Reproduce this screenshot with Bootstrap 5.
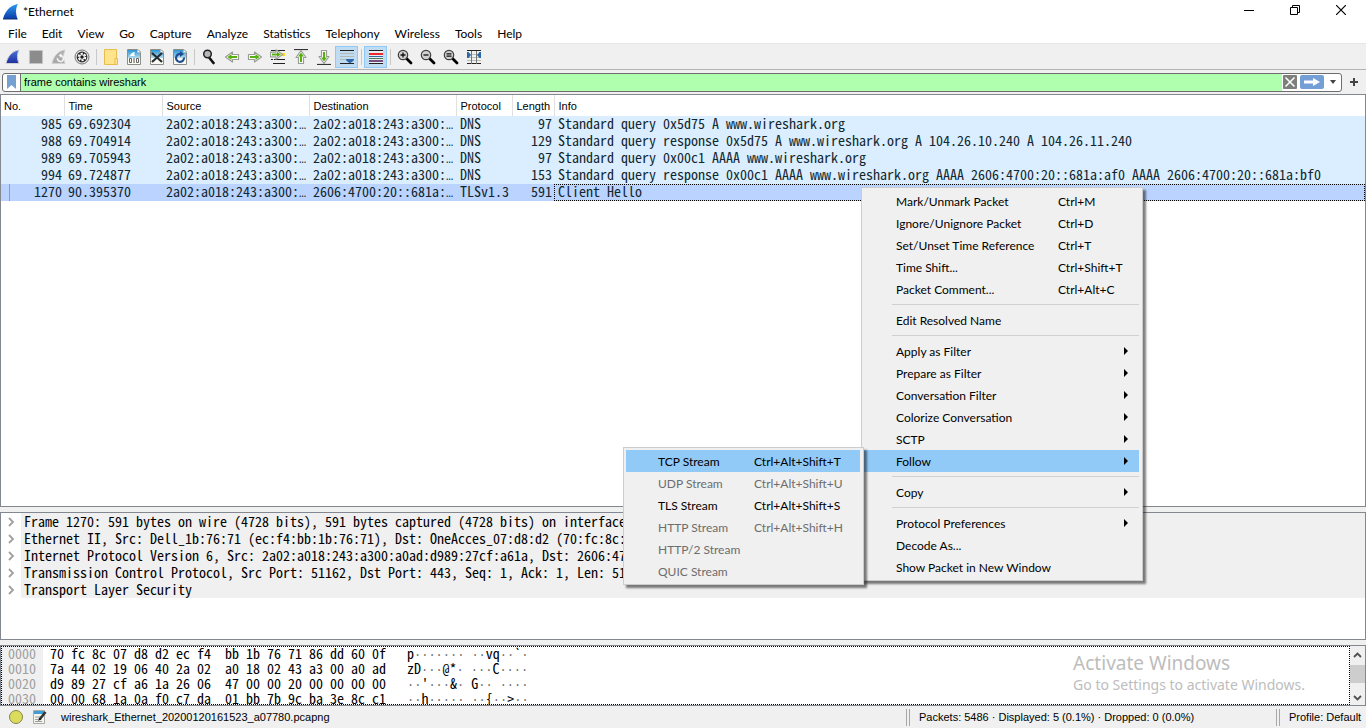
<!DOCTYPE html>
<html lang="en">
<head>
<meta charset="utf-8">
<meta name="viewport" content="width=device-width, initial-scale=1">
<title>*Ethernet</title>
<link href="https://cdn.jsdelivr.net/npm/bootstrap@5.3.0/dist/css/bootstrap.min.css" rel="stylesheet">
<style>
  :root { --ui: Lato, "Open Sans", sans-serif; --tahoma: "Liberation Sans", sans-serif; --fixed: "Noto Sans Mono CJK SC", "Liberation Mono", monospace; --frame: #828790; --face: #f0f0f0; }
  body { font: 12px/16px var(--ui); color: #000; background: var(--face); height: 100vh; overflow: hidden; }
  button { border: 0; background: none; padding: 0; color: inherit; }
  svg { display: block; flex: none; }
  .title-bar { height: 24px; background: #fff; padding: 0 2px 0 3px; }
  .win-btn { width: 46px; height: 20px; }
  .menu-bar { height: 19px; background: #fff; padding-left: 8px; gap: 15px; }
  .menu-bar .nav-link { padding: 0; color: #000; line-height: 19px; }
  .tool-bar { height: 27px; border-top: 1px solid #e6e6e6; border-bottom: 1px solid #b4b4b4; padding-left: 1px; }
  .tool-btn { width: 23px; height: 22px; border: 1px solid transparent; display: flex; align-items: center; justify-content: center; }
  .tool-btn.active { background: #c0dcf3; border-color: #90c8f6; }
  .tool-sep { width: 1px; height: 16px; margin: 0 2px 0 3px; background: #c8c8c8; }
  .filter-bar { height: 24px; padding: 0 4px 0 2px; }
  .filter-box { height: 19px; border: 1px solid #6e6e6e; border-radius: 3px; background: #fff; overflow: hidden; }
  .filter-box input { border: 0; border-left: 1px solid #6e6e6e; border-radius: 0; background: #afffaf; color: #000; font: 11px/17px var(--tahoma); padding: 0 3px; min-height: 0; height: 17px; }
  .filter-box input:focus { background: #afffaf; }
  .pane { background: #fff; border: 1px solid var(--frame); overflow: hidden; }
  .pane + .pane { margin-top: 5px; }
  .packets { table-layout: fixed; width: 100%; border-collapse: collapse; }
  .packets th { font: 11px/16px var(--tahoma); height: 21px; padding: 0 0 0 4px; border-right: 1px solid #e0e0e0; }
  .packets th:first-child { padding-left: 3px; }
  .packets th:last-child { border-right: 0; }
  .packets td { font: 14px/15px var(--fixed); height: 17px; padding: 0 0 0 4px; color: #12272e; background: #daeeff; white-space: nowrap; vertical-align: top; }
  .packets .picked td { background: #bad3ff; }
  .packets .picked td:last-child { outline: 1px dotted #000; outline-offset: -1px; }
  .packets .picked td:first-child { background-image: linear-gradient(#9a9a9a, #9a9a9a); background-size: 1px 100%; background-position: 8px 0; background-repeat: no-repeat; }
  .packets .num { text-align: right; padding-right: 2px; }
  .dots { font: 12px/0 "Liberation Mono", monospace; }
  .details { height: 128px; }
  .details li { height: 17px; font: 14px/17px var(--fixed); white-space: nowrap; }
  .details .twist { width: 20px; padding-left: 6px; }
  .details .row-text { background: var(--face); padding-left: 3px; }
  .hex { height: 61px; }
  .hex-grid { outline: 1px dotted #000; outline-offset: -1px; }
  .hex pre { font: 14px/15px var(--fixed); margin: 0; overflow: hidden; color: #000; }
  .hex .offs { width: 42px; padding-left: 7px; background: var(--face); color: #a0a0a0; }
  .hex .bytes { padding-left: 7px; }
  .hex .chars { padding-left: 21px; }
  .hex .dots { color: #707070; }
  .scroll { width: 15px; background: var(--face); }
  .scroll .thumb { height: 18px; background: #cdcdcd; }
  .status-bar { height: 22px; font: 11px/16px var(--tahoma); }
  .status-bar .file-name { margin-left: 13px; }
  .status-sep { width: 4px; height: 17px; border: solid #a8a8a8; border-width: 0 1px; }
  .status-bar .packets-info { width: 366px; padding-left: 9px; }
  .status-bar .profile { width: 86px; padding-left: 9px; }
  .pop { background: var(--face); border: 1px solid #ccc; border-radius: 0; padding: 2px 3px 2px 2px; color: #000; box-shadow: 3px 3px 2px rgba(0,0,0,.5); margin: 0; }
  .pop .dropdown-item { height: 22px; padding: 1px 14px 0 32px; line-height: 20px; display: flex; align-items: center; color: #000; font-size: 12px; }
  .pop .dropdown-item.active { background: #91c9f7; }
  .pop .dropdown-item:disabled { color: #6d6d6d; }
  .pop .dropdown-divider { margin: 4px 0 4px 28px; border-top: 1px solid #d0d0d0; opacity: 1; }
  .pop svg { margin: 0 -3px 2px auto; }
  .context { left: 861px; top: 187px; width: 282px; }
  .context .item-name { width: 162px; }
  .sub { right: 100%; left: auto; top: -3px; width: 241px; min-width: 0; }
  .sub .item-name { width: 96px; }
  .watermark { right: 61px; bottom: 33px; color: #bdbdbd; font-family: "Noto Sans", "Open Sans", sans-serif; pointer-events: none; }
  .watermark .big { font-size: 19px; line-height: 24px; }
  .watermark .note { font-size: 14px; line-height: 20px; }
</style>
</head>
<body class="d-flex flex-column position-relative">

<svg width="0" height="0" class="position-absolute" aria-hidden="true">
  <defs>
    <linearGradient id="fin" x1="0" y1="0" x2="0" y2="1"><stop offset="0" stop-color="#2f9bf0"/><stop offset="1" stop-color="#0a3ba8"/></linearGradient>
    <linearGradient id="fin2" x1="0" y1="0" x2="0" y2="1"><stop offset="0" stop-color="#4a74dc"/><stop offset="1" stop-color="#1d2f9c"/></linearGradient>
    <linearGradient id="sky" x1="0" y1="0" x2="0" y2="1"><stop offset="0" stop-color="#2a93d4"/><stop offset="1" stop-color="#b4dcf0"/></linearGradient>
    <symbol id="doc" viewBox="0 0 16 16"><path d="M1.500.5h10.500l2.500 2.500v12.500h-13z" fill="#fbfbf4" stroke="#8b8f88"/><path d="M2 1h9.700l2.300 2.300v5.700H2z" fill="url(#sky)"/><path d="M11.500.500v3h3z" fill="#fff" stroke="#a8b4ba" stroke-width=".6"/></symbol>
    <symbol id="arrow" viewBox="0 0 16 16"><path d="M1.500 5.500h6V3l7 5-7 5v-2.500h-6z" fill="#fff" stroke="#9a9d96" stroke-width="1.200" stroke-linejoin="round"/><path d="M3 7h5.500V5l4 3-4 3V9H3z" fill="#58b010"/></symbol>
    <symbol id="lens" viewBox="0 0 16 16"><path d="M9.500 9.500l4.500 4.500" stroke="#000" stroke-width="2.800" stroke-linecap="round"/><circle cx="6" cy="6" r="4.700" fill="#d0d0d0" stroke="#404040" stroke-width="1.200"/></symbol>
    <symbol id="tri" viewBox="0 0 4 8"><path d="M0 0l4 4-4 4z" fill="#000"/></symbol>
    <symbol id="twist" viewBox="0 0 8 10"><path d="M2 1l4 4-4 4" fill="none" stroke="#a0a0a0" stroke-width="1.800"/></symbol>
  </defs>
</svg>

<header>
  <div class="title-bar d-flex align-items-center">
    <svg width="16" height="16" viewBox="0 0 16 16"><path d="M0 15C2 7 7 1.500 15 0c-2.500 4-2.500 9-.5 15z" fill="url(#fin)"/><path d="M0 15h14.500" stroke="#0c3272"/></svg>
    <span class="ms-1">*Ethernet</span>
    <div class="ms-auto mb-1 d-flex">
      <button class="win-btn d-flex align-items-center justify-content-center" aria-label="Minimize"><svg width="10" height="10"><path d="M0 5.500h10" stroke="#000"/></svg></button>
      <button class="win-btn d-flex align-items-center justify-content-center" aria-label="Restore"><svg width="10" height="10" fill="none" stroke="#000"><path d="M.5 2.500h7v7h-7zM2.500 2.500v-2h7v7h-2"/></svg></button>
      <button class="win-btn d-flex align-items-center justify-content-center" aria-label="Close"><svg width="10" height="10"><path d="M0 0l10 10M10 0L0 10" stroke="#000" stroke-width="1.200"/></svg></button>
    </div>
  </div>
  <nav class="menu-bar nav">
    <a class="nav-link" href="#">File</a><a class="nav-link" href="#">Edit</a><a class="nav-link" href="#">View</a><a class="nav-link" href="#">Go</a><a class="nav-link" href="#">Capture</a><a class="nav-link" href="#">Analyze</a><a class="nav-link" href="#">Statistics</a><a class="nav-link" href="#">Telephony</a><a class="nav-link" href="#">Wireless</a><a class="nav-link" href="#">Tools</a><a class="nav-link" href="#">Help</a>
  </nav>
  <div class="tool-bar d-flex align-items-center" role="toolbar" aria-label="Main toolbar">
    <button class="tool-btn" aria-label="Start capture"><svg width="16" height="16" viewBox="0 0 16 16"><path d="M1 14.500C2.500 7.500 7 2 14 1c-2 4-2 9 0 13.500z" fill="url(#fin2)" stroke="#d0d0d4"/></svg></button>
    <button class="tool-btn" aria-label="Stop capture"><svg width="16" height="16" viewBox="0 0 16 16"><path d="M1.500 1.500h13v13h-13z" fill="#8c8c8c" stroke="#c4c4c4"/></svg></button>
    <button class="tool-btn" aria-label="Restart capture"><svg width="16" height="16" viewBox="0 0 16 16"><path d="M1 14.500C2.500 7.500 7 2 14 1c-2 4-2 9 0 13.500z" fill="#aaa" stroke="#d0d0d0"/><path d="M6.500 9a3 3 0 1 0 3-2.500" fill="none" stroke="#f4f4f4" stroke-width="1.600"/><path d="M10.500 4v5L7.500 6.500z" fill="#f4f4f4"/></svg></button>
    <button class="tool-btn" aria-label="Capture options"><svg width="16" height="16" viewBox="0 0 16 16"><circle cx="8" cy="8" r="7" fill="#e8e8e8" stroke="#777"/><circle cx="8" cy="8" r="5.400" fill="#2a2a2a"/><circle cx="8" cy="8" r="3.400" fill="none" stroke="#fff" stroke-width="1.800" stroke-dasharray="2.200 1.360"/><circle cx="8" cy="8" r="2.800" fill="#f4f4f4"/><circle cx="8" cy="8" r="1.700" fill="#1a1a1a"/></svg></button>
    <span class="tool-sep"></span>
    <button class="tool-btn" aria-label="Open"><svg width="16" height="16" viewBox="0 0 16 16"><path d="M1.500 .5h12v9h1v6h-13z" fill="#ffe48c" stroke="#e8bd4c"/><path d="M12 15V9.500h2" fill="none" stroke="#e8bd4c"/></svg></button>
    <button class="tool-btn" aria-label="Save"><svg width="16" height="16" viewBox="0 0 16 16"><use href="#doc"/><path d="M4 7c1-3 3-4 5-4-1 1.500-1 2.500 0 4z" fill="#fff"/><path d="M3.500 9.500h2v4h-2zM10.500 9.500h2v4h-2z" fill="none" stroke="#555" stroke-width=".9"/><path d="M8 9v5" stroke="#555"/></svg></button>
    <button class="tool-btn" aria-label="Close file"><svg width="16" height="16" viewBox="0 0 16 16"><use href="#doc"/><path d="M3 4l10 9M13 4L3 13" stroke="#262c30" stroke-width="2.200"/></svg></button>
    <button class="tool-btn" aria-label="Reload"><svg width="16" height="16" viewBox="0 0 16 16"><use href="#doc"/><path d="M12 8.500A4 4 0 1 1 8.500 5" fill="none" stroke="#1f4e90" stroke-width="2.200"/><path d="M8 2v6l4-3z" fill="#1f4e90"/></svg></button>
    <span class="tool-sep"></span>
    <button class="tool-btn" aria-label="Find packet"><svg width="16" height="16" viewBox="0 0 16 16"><path d="M8.500 9l4 5" stroke="#111" stroke-width="2.600" stroke-linecap="round"/><circle cx="6.500" cy="5" r="3.800" fill="#b4b8bc" stroke="#222" stroke-width="1.500"/></svg></button>
    <button class="tool-btn" aria-label="Previous packet"><svg width="16" height="16"><use href="#arrow" transform="matrix(-1 0 0 1 16 0)" width="16" height="16"/></svg></button>
    <button class="tool-btn" aria-label="Next packet"><svg width="16" height="16"><use href="#arrow" width="16" height="16"/></svg></button>
    <button class="tool-btn" aria-label="Go to packet"><svg width="16" height="16" viewBox="0 0 16 16"><path d="M1 1.500h14M4 10.500h11M1 10.500h2M3 14.500h12" stroke="#222" stroke-width="1.200"/><path d="M10 5.500h5" stroke="#f4d928" stroke-width="3"/><use href="#arrow" x="-1" y="-2" width="15" height="15"/></svg></button>
    <button class="tool-btn" aria-label="First packet"><svg width="16" height="16"><path d="M1 .5h14" stroke="#333" stroke-width="1.200"/><use href="#arrow" width="16" height="16" transform="rotate(-90 8 8)"/></svg></button>
    <button class="tool-btn" aria-label="Last packet"><svg width="16" height="16"><path d="M1 15.500h14" stroke="#333" stroke-width="1.200"/><use href="#arrow" width="16" height="16" transform="rotate(90 8 8)"/></svg></button>
    <button class="tool-btn active" aria-label="Auto scroll"><svg width="16" height="16" viewBox="0 0 16 16"><path d="M1 1.500h14M1 14.500h14" stroke="#222"/><path d="M1 4.500h14M1 7.500h14M1 10.500h6" stroke="#b4b8b0"/><path d="M7 10h8c0 2.500-2 2.500-4 4.500-2-2-4-2-4-4.500z" fill="#2b66a8"/></svg></button>
    <span class="tool-sep"></span>
    <button class="tool-btn active" aria-label="Colorize packets"><svg width="16" height="16" viewBox="0 0 16 16"><path d="M1 1h14v14H1z" fill="#e6eef6"/><path d="M1 1h14v1H1zM1 14h14v1H1z" fill="#222"/><path d="M1 4h14v2H1z" fill="#ef2929"/><path d="M1 7h14v1H1z" fill="#3465a4"/><path d="M1 9h14v1H1z" fill="#4e7a50"/><path d="M1 11h14v2H1z" fill="#75507b"/></svg></button>
    <span class="tool-sep"></span>
    <button class="tool-btn" aria-label="Zoom in"><svg width="16" height="16" viewBox="0 0 16 16"><use href="#lens"/><path d="M3.500 6h5M6 3.500v5" stroke="#111" stroke-width="1.300"/></svg></button>
    <button class="tool-btn" aria-label="Zoom out"><svg width="16" height="16" viewBox="0 0 16 16"><use href="#lens"/><path d="M3.500 6h5" stroke="#111" stroke-width="1.300"/></svg></button>
    <button class="tool-btn" aria-label="Normal size"><svg width="16" height="16" viewBox="0 0 16 16"><use href="#lens"/><path d="M3.500 4.800h5M3.500 7.200h5" stroke="#111" stroke-width="1.200"/></svg></button>
    <button class="tool-btn" aria-label="Resize columns"><svg width="16" height="16" viewBox="0 0 16 16"><path d="M1 1.500h14M1 14.500h14" stroke="#222"/><path d="M1 5.500h14M1 8.500h14M1 11.500h14" stroke="#b8bcb4"/><path d="M5.500 2v13M10.500 2v13" stroke="#777"/><path d="M1 3h1.500L5 6 2.500 9H1zM15 3h-1.500L11 6l2.500 3H15z" fill="#2b66a8"/></svg></button>
  </div>
  <div class="filter-bar d-flex align-items-center">
    <div class="filter-box d-flex align-items-center flex-grow-1">
      <button class="px-1" aria-label="Bookmarks"><svg width="9" height="15"><path d="M0 0h9v14l-4.500-4L0 14z" fill="#76a0d0"/></svg></button>
      <input class="form-control shadow-none flex-grow-1" type="text" aria-label="Display filter" value="frame contains wireshark">
      <button aria-label="Clear filter"><svg width="16" height="15" viewBox="0 0 16 15"><rect x="1" y="0" width="14" height="14" rx="1" fill="#7e7e7a"/><path d="M3.500 2.500l9 9M12.500 2.500l-9 9" stroke="#fff" stroke-width="1.500"/></svg></button>
      <button aria-label="Apply filter"><svg width="27" height="15" viewBox="0 0 27 15"><rect x="2" y="0" width="24" height="14" rx="2" fill="#739fd6"/><path d="M6 5.500h9V3l7 4-7 4V8.500H6z" fill="#fff"/></svg></button>
      <button class="px-1" aria-label="Recent filters"><svg width="8" height="6"><path d="M1 1h6L4 5z" fill="#444"/></svg></button>
    </div>
    <button class="ms-2 me-1" aria-label="Add filter button"><svg width="8" height="8"><path d="M0 4h8M4 0v8" stroke="#444" stroke-width="2"/></svg></button>
  </div>
</header>

<main class="d-flex flex-column flex-grow-1 overflow-hidden">
  <section class="pane flex-grow-1">
    <table class="packets">
      <colgroup><col style="width:63px"><col style="width:98px"><col style="width:147px"><col style="width:147px"><col style="width:56px"><col style="width:42px"><col></colgroup>
      <thead><tr><th>No.</th><th>Time</th><th>Source</th><th>Destination</th><th>Protocol</th><th>Length</th><th>Info</th></tr></thead>
      <tbody>
        <tr><td class="num">985</td><td>69.692304</td><td>2a02:a018:243:a300:<span class="dots">…</span></td><td>2a02:a018:243:a300:<span class="dots">…</span></td><td>DNS</td><td class="num">97</td><td>Standard query 0x5d75 A www.wireshark.org</td></tr>
        <tr><td class="num">988</td><td>69.704914</td><td>2a02:a018:243:a300:<span class="dots">…</span></td><td>2a02:a018:243:a300:<span class="dots">…</span></td><td>DNS</td><td class="num">129</td><td>Standard query response 0x5d75 A www.wireshark.org A 104.26.10.240 A 104.26.11.240</td></tr>
        <tr><td class="num">989</td><td>69.705943</td><td>2a02:a018:243:a300:<span class="dots">…</span></td><td>2a02:a018:243:a300:<span class="dots">…</span></td><td>DNS</td><td class="num">97</td><td>Standard query 0x00c1 AAAA www.wireshark.org</td></tr>
        <tr><td class="num">994</td><td>69.724877</td><td>2a02:a018:243:a300:<span class="dots">…</span></td><td>2a02:a018:243:a300:<span class="dots">…</span></td><td>DNS</td><td class="num">153</td><td>Standard query response 0x00c1 AAAA www.wireshark.org AAAA 2606:4700:20::681a:af0 AAAA 2606:4700:20::681a:bf0</td></tr>
        <tr class="picked"><td class="num">1270</td><td>90.395370</td><td>2a02:a018:243:a300:<span class="dots">…</span></td><td>2606:4700:20::681a:<span class="dots">…</span></td><td>TLSv1.3</td><td class="num">591</td><td>Client Hello</td></tr>
      </tbody>
    </table>
  </section>

  <section class="pane details">
    <ul class="list-unstyled m-0">
      <li class="d-flex"><span class="twist d-flex align-items-center"><svg width="8" height="10"><use href="#twist"/></svg></span><span class="row-text flex-grow-1">Frame 1270: 591 bytes on wire (4728 bits), 591 bytes captured (4728 bits) on interface</span></li>
      <li class="d-flex"><span class="twist d-flex align-items-center"><svg width="8" height="10"><use href="#twist"/></svg></span><span class="row-text flex-grow-1">Ethernet II, Src: Dell_1b:76:71 (ec:f4:bb:1b:76:71), Dst: OneAcces_07:d8:d2 (70:fc:8c:</span></li>
      <li class="d-flex"><span class="twist d-flex align-items-center"><svg width="8" height="10"><use href="#twist"/></svg></span><span class="row-text flex-grow-1">Internet Protocol Version 6, Src: 2a02:a018:243:a300:a0ad:d989:27cf:a61a, Dst: 2606:47</span></li>
      <li class="d-flex"><span class="twist d-flex align-items-center"><svg width="8" height="10"><use href="#twist"/></svg></span><span class="row-text flex-grow-1">Transmission Control Protocol, Src Port: 51162, Dst Port: 443, Seq: 1, Ack: 1, Len: 51</span></li>
      <li class="d-flex"><span class="twist d-flex align-items-center"><svg width="8" height="10"><use href="#twist"/></svg></span><span class="row-text flex-grow-1">Transport Layer Security</span></li>
    </ul>
  </section>

  <section class="pane hex d-flex">
    <div class="hex-grid d-flex flex-grow-1">
<pre class="offs">0000
0010
0020
0030</pre>
<pre class="bytes">70 fc 8c 07 d8 d2 ec f4  bb 1b 76 71 86 dd 60 0f
7a 44 02 19 06 40 2a 02  a0 18 02 43 a3 00 a0 ad
d9 89 27 cf a6 1a 26 06  47 00 00 20 00 00 00 00
00 00 68 1a 0a f0 c7 da  01 bb 7b 9c ba 3e 8c c1</pre>
<pre class="chars">p<span class="dots">·······</span> <span class="dots">··</span>vq<span class="dots">··</span>`<span class="dots">·</span>
zD<span class="dots">···</span>@*<span class="dots">·</span> <span class="dots">···</span>C<span class="dots">····</span>
<span class="dots">··</span>'<span class="dots">···</span>&amp;<span class="dots">·</span> G<span class="dots">··</span> <span class="dots">····</span>
<span class="dots">··</span>h<span class="dots">·····</span> <span class="dots">··</span>{<span class="dots">··</span>&gt;<span class="dots">··</span></pre>
    </div>
    <div class="scroll d-flex flex-column">
      <button class="d-flex flex-grow-1 align-items-center justify-content-center" aria-label="Scroll up"><svg width="9" height="6"><path d="M1 5l3.500-3.500L8 5" fill="none" stroke="#505050" stroke-width="1.800"/></svg></button>
      <div class="thumb"></div>
      <button class="d-flex flex-grow-1 align-items-end pb-1 justify-content-center" aria-label="Scroll down"><svg width="9" height="6"><path d="M1 1l3.500 3.500L8 1" fill="none" stroke="#505050" stroke-width="1.800"/></svg></button>
    </div>
  </section>
</main>

<footer class="status-bar d-flex align-items-center">
  <button class="ms-2" aria-label="Expert information"><svg width="16" height="16"><circle cx="8" cy="8" r="6.500" fill="#dcdc5c" stroke="#84844c"/></svg></button>
  <button class="ms-2" aria-label="Capture comment"><svg width="16" height="16" viewBox="0 0 16 16"><path d="M1.500 1.500h11v13h-11z" fill="#f4f4ee" stroke="#a8aca4"/><path d="M2 2h10v3H2z" fill="#3f9ed6"/><path d="M3 8h7M3 10.500h6M3 12.500h7" stroke="#888" stroke-width=".8"/><path d="M13.500 3l-6 7.500" stroke="#333" stroke-width="2.600"/><path d="M7.800 9l1.500 1.200L6 12z" fill="#111"/></svg></button>
  <span class="file-name flex-grow-1">wireshark_Ethernet_20200120161523_a07780.pcapng</span>
  <span class="status-sep"></span>
  <span class="packets-info">Packets: 5486 · Displayed: 5 (0.1%) · Dropped: 0 (0.0%)</span>
  <span class="status-sep"></span>
  <span class="profile">Profile: Default</span>
</footer>

<div class="watermark position-absolute"><div class="big">Activate Windows</div><div class="note">Go to Settings to activate Windows.</div></div>

<ul class="dropdown-menu show pop context position-absolute">
  <li><button class="dropdown-item"><span class="item-name">Mark/Unmark Packet</span><span>Ctrl+M</span></button></li>
  <li><button class="dropdown-item"><span class="item-name">Ignore/Unignore Packet</span><span>Ctrl+D</span></button></li>
  <li><button class="dropdown-item"><span class="item-name">Set/Unset Time Reference</span><span>Ctrl+T</span></button></li>
  <li><button class="dropdown-item"><span class="item-name">Time Shift...</span><span>Ctrl+Shift+T</span></button></li>
  <li><button class="dropdown-item"><span class="item-name">Packet Comment...</span><span>Ctrl+Alt+C</span></button></li>
  <li><hr class="dropdown-divider"></li>
  <li><button class="dropdown-item">Edit Resolved Name</button></li>
  <li><hr class="dropdown-divider"></li>
  <li><button class="dropdown-item">Apply as Filter<svg width="4" height="8"><use href="#tri"/></svg></button></li>
  <li><button class="dropdown-item">Prepare as Filter<svg width="4" height="8"><use href="#tri"/></svg></button></li>
  <li><button class="dropdown-item">Conversation Filter<svg width="4" height="8"><use href="#tri"/></svg></button></li>
  <li><button class="dropdown-item">Colorize Conversation<svg width="4" height="8"><use href="#tri"/></svg></button></li>
  <li><button class="dropdown-item">SCTP<svg width="4" height="8"><use href="#tri"/></svg></button></li>
  <li class="position-relative">
    <button class="dropdown-item active">Follow<svg width="4" height="8"><use href="#tri"/></svg></button>
    <ul class="dropdown-menu show pop sub">
      <li><button class="dropdown-item active"><span class="item-name">TCP Stream</span><span>Ctrl+Alt+Shift+T</span></button></li>
      <li><button class="dropdown-item" disabled><span class="item-name">UDP Stream</span><span>Ctrl+Alt+Shift+U</span></button></li>
      <li><button class="dropdown-item"><span class="item-name">TLS Stream</span><span>Ctrl+Alt+Shift+S</span></button></li>
      <li><button class="dropdown-item" disabled><span class="item-name">HTTP Stream</span><span>Ctrl+Alt+Shift+H</span></button></li>
      <li><button class="dropdown-item" disabled>HTTP/2 Stream</button></li>
      <li><button class="dropdown-item" disabled>QUIC Stream</button></li>
    </ul>
  </li>
  <li><hr class="dropdown-divider"></li>
  <li><button class="dropdown-item">Copy<svg width="4" height="8"><use href="#tri"/></svg></button></li>
  <li><hr class="dropdown-divider"></li>
  <li><button class="dropdown-item">Protocol Preferences<svg width="4" height="8"><use href="#tri"/></svg></button></li>
  <li><button class="dropdown-item">Decode As...</button></li>
  <li><button class="dropdown-item">Show Packet in New Window</button></li>
</ul>

<script src="https://cdn.jsdelivr.net/npm/bootstrap@5.3.0/dist/js/bootstrap.bundle.min.js"></script>
</body>
</html>
